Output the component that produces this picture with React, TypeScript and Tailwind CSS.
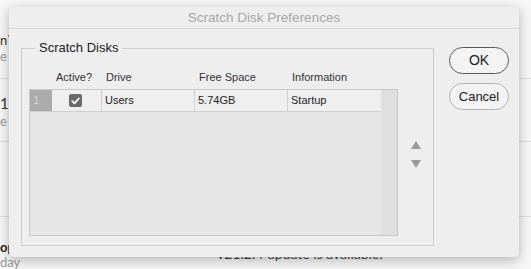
const font = "font-['Liberation_Sans',Arial,sans-serif]";

function Triangle({ up }: { up: boolean }) {
  return (
    <svg width="10" height="8" viewBox="0 0 10 8">
      <path d={up ? 'M5 0 L10 8 L0 8 Z' : 'M0 0 L10 0 L5 8 Z'} fill="#9b9b9b" />
    </svg>
  );
}

function Checkbox() {
  return (
    <div className="w-[13px] h-[13px] rounded-[2px] bg-[#6a6a6a] flex items-center justify-center">
      <svg width="9" height="8" viewBox="0 0 9 8">
        <path d="M1.3 4.2 L3.5 6.3 L7.8 1.5" fill="none" stroke="#fff" strokeWidth="1.8" strokeLinecap="round" strokeLinejoin="round" />
      </svg>
    </div>
  );
}

export default function App() {
  const cols = [
    { label: 'Active?', w: 'w-[50px]' },
    { label: 'Drive', w: 'w-[93px]' },
    { label: 'Free Space', w: 'w-[93px]' },
    { label: 'Information', w: 'w-[93px]' },
  ];

  return (
    <div className={`relative w-[531px] h-[269px] overflow-hidden bg-[#f6f6f6] ${font}`}>
      {/* app behind the dialog */}
      <div className="flex flex-col h-full text-[13px] font-['Lato',sans-serif]">
        <div className="h-[80px] border-b border-[#dcdcdc] pt-[32px]">
          <div className="leading-[16px] text-[#333] tracking-[-1px]">n V</div>
          <div className="leading-[16px] text-[#999]">e</div>
        </div>
        <div className="h-[65px] border-b border-[#dcdcdc] pt-[16px]">
          <div className="leading-[16px] text-[15px] text-[#333]">11</div>
          <div className="leading-[16px] mt-[2px] text-[#999]">e</div>
        </div>
        <div className="h-[77px] border-b border-[#dcdcdc]"></div>
        <div className="flex-1 flex pt-[22px]">
          <div className="w-[60px]">
            <div className="leading-[16px] font-bold text-[#222]">op</div>
            <div className="leading-[14px] text-[#999]">day</div>
          </div>
          <div className="ml-[157px] mt-[7px] leading-[16px] text-[14px] text-[#444]">v21.2.4 update is available.</div>
        </div>
      </div>

      {/* dialog window */}
      <div className="absolute left-[9px] top-[7px] w-[510px] h-[250px] rounded-[5px] bg-[#eeeeee] shadow-[0_3px_12px_rgba(0,0,0,0.28)] flex flex-col">
        <div className="h-[22px] border-b border-[#d6d6d6] text-center text-[13.5px] leading-[22px] text-[#a8a8a8]">
          Scratch Disk Preferences
        </div>
        <div className="flex pl-[12px] pt-[11px]">
          <fieldset className="w-[413px] h-[206px] border border-[#cdcdcd] pl-[7px]">
            <legend className="ml-[6px] px-[4px] text-[13px] leading-[16px] text-[#222]">Scratch Disks</legend>
            <div className="flex mt-[14px] h-[14px] text-[11px] leading-[14px] text-[#333]">
              <div className="w-[23px]"></div>
              {cols.map((c) => (
                <div key={c.label} className={`${c.w} pl-[4px]`}>{c.label}</div>
              ))}
            </div>
            <div className="flex mt-[5px]">
              <div className="w-[369px] h-[147px] border border-[#c9c9c9] bg-[#e6e6e6] flex">
                <div className="w-[351px] flex flex-col">
                  <div className="flex h-[22px] border-b border-[#d0d0d0] text-[11px] text-[#222]">
                    <div className="w-[22px] bg-[#ababab] text-[#d4d4d4] pl-[3px] leading-[21px]">1</div>
                    <div className="w-[50px] bg-[#efefef] border-r border-[#d0d0d0] flex items-center pl-[17px]">
                      <Checkbox />
                    </div>
                    <div className="w-[93px] bg-[#efefef] border-r border-[#d0d0d0] pl-[3px] leading-[21px]">Users</div>
                    <div className="w-[93px] bg-[#efefef] border-r border-[#d0d0d0] pl-[3px] leading-[21px]">5.74GB</div>
                    <div className="w-[93px] bg-[#efefef] pl-[3px] leading-[21px]">Startup</div>
                  </div>
                </div>
                <div className="w-[16px] bg-[#e0e0e0]"></div>
              </div>
              <div className="ml-[13px] mt-[52px] flex flex-col gap-[11px]">
                <Triangle up />
                <Triangle up={false} />
              </div>
            </div>
          </fieldset>
          <div className="ml-[15px] mt-[7px] flex flex-col gap-[9px]">
            <button className="w-[60px] h-[27px] rounded-full border border-[#5a5a5a] bg-[#f3f3f3] text-[14px] text-[#222]">OK</button>
            <button className="w-[60px] h-[27px] rounded-full border border-[#b3b3b3] bg-[#f3f3f3] text-[13px] text-[#222]">Cancel</button>
          </div>
        </div>
      </div>
    </div>
  );
}
